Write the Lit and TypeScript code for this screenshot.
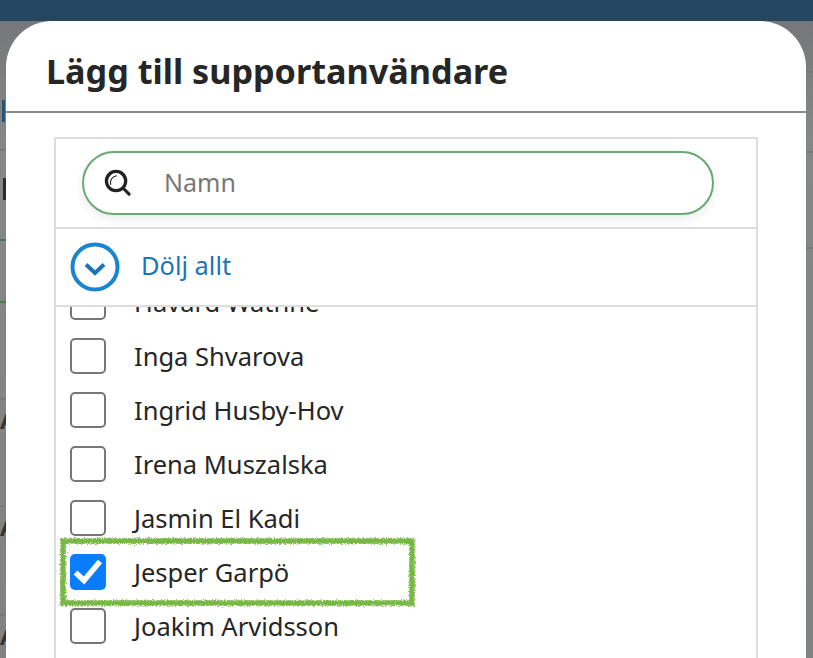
import { LitElement, html, css, svg } from "lit";
import { customElement } from "lit/decorators.js";

const names: [string, boolean][] = [
  ["Håvard Wathne", false],
  ["Inga Shvarova", false],
  ["Ingrid Husby-Hov", false],
  ["Irena Muszalska", false],
  ["Jasmin El Kadi", false],
  ["Jesper Garpö", true],
  ["Joakim Arvidsson", false],
];

@customElement("app-root")
export class AppRoot extends LitElement {
  static styles = css`
    :host {
      display: block;
      position: relative;
      width: 813px;
      height: 658px;
      overflow: hidden;
      font-family: "Noto Sans", sans-serif;
      background: #848686;
      color: #262626;
    }
    .topbar { height: 21px; background: #234663; }
    .backdrop { display: flex; justify-content: space-between; height: 637px; background: linear-gradient(#757778, #868888 18%, #808282); }
    .col { width: 400px; display: flex; flex-direction: column; }
    .b { flex: none; border-bottom: 2px solid #787a7a; box-sizing: border-box; display: flex; align-items: flex-start; overflow: hidden; }
    .h52 { height: 52px; }
    .h78 { height: 78px; }
    .h80 { height: 80px; }
    .h90 { height: 90px; }
    .h96 { height: 96px; }
    .h62 { height: 62px; }
    .h97 { height: 97px; }
    .h107 { height: 107px; }
    .h109 { height: 109px; }
    .green { border-color: #4d7557; }
    .mark-blue { width: 3px; height: 22px; background: #23557f; margin: 27px 0 0 2px; }
    .mark-dark { width: 3px; height: 22px; background: #2a2b2c; margin: 27px 0 0 3px; }
    .a { font-weight: 700; font-size: 22px; line-height: 1; color: #333; margin-top: 9px; }
    .modal {
      position: absolute;
      left: 6px;
      top: 21px;
      width: 800px;
      height: 700px;
      background: #fff;
      border-radius: 46px 46px 0 0;
    }
    .head {
      box-sizing: border-box;
      border-bottom: 2px solid #8a8a8a;
      height: 92px;
      padding: 26px 0 0 40px;
    }
    h1 {
      margin: 0;
      font-size: 34.2px;
      line-height: 48px;
      font-weight: 700;
      color: #262626;
      white-space: nowrap;
    }
    .panel {
      margin: 24px 0 0 48px;
      width: 704px;
      box-sizing: border-box;
      border: 2px solid #dddddd;
      border-bottom: 0;
      height: 600px;
    }
    .search-wrap { height: 90px; box-sizing: border-box; border-bottom: 2px solid #dddddd; padding: 12px 0 0 26px; }
    .search {
      width: 632px;
      height: 64px;
      box-sizing: border-box;
      border: 2px solid #69a972;
      border-radius: 32px;
      box-shadow: 0 4px 10px rgba(0, 0, 0, 0.08);
      display: flex;
      align-items: center;
      padding-left: 20px;
      gap: 33px;
      background: #fff;
    }
    .search svg { width: 27px; height: 27px; flex: none; margin-bottom: 2px; }
    .search span { font-size: 25px; color: #777; line-height: 1; padding-bottom: 2px; }
    .toggle {
      height: 78px;
      box-sizing: border-box;
      border-bottom: 2px solid #dddddd;
      display: flex;
      align-items: center;
      padding-left: 14px;
      gap: 21px;
      color: #1b75b9;
      font-size: 25.4px;
    }
    .toggle svg { width: 50px; height: 50px; flex: none; }
    .toggle span { padding-bottom: 4px; }
    .list { height: 500px; overflow: hidden; }
    .list-inner { margin-top: -32px; }
    .row { height: 54px; display: flex; align-items: center; padding-left: 14px; gap: 28px; font-size: 25.5px; white-space: nowrap; }
    .box {
      width: 36px;
      height: 36px;
      box-sizing: border-box;
      border: 2px solid #777;
      border-radius: 5px;
      flex: none;
      background: #fff;
    }
    .box.on {
      border: 0;
      background: #0a7cff;
      display: flex;
      align-items: center;
      justify-content: center;
    }
    .box.on svg { width: 30px; height: 30px; }
    .mark {
      position: absolute;
      left: 0;
      top: 0;
      width: 813px;
      height: 658px;
      pointer-events: none;
    }
  `;

  render() {
    return html`
      <div class="topbar"></div>
      <div class="backdrop">
        <div class="col">
          <div class="b h52"></div>
          <div class="b h78"><div class="mark-blue"></div></div>
          <div class="b h90 green"><div class="mark-dark"></div></div>
          <div class="b h62 green"></div>
          <div class="b h97"></div>
          <div class="b h107"><span class="a">A</span></div>
          <div class="b h109"><span class="a">A</span></div>
          <div class="b h52"><span class="a">A</span></div>
        </div>
        <div class="col">
          <div class="b h52"></div>
          <div class="b h80"></div>
          <div class="b h96"></div>
        </div>
      </div>
      <div class="modal">
        <div class="head"><h1>Lägg till supportanvändare</h1></div>
        <div class="panel">
          <div class="search-wrap">
            <div class="search">
              <svg viewBox="0 0 28 28" fill="none" stroke="#222" stroke-linecap="round">
                <circle cx="12.5" cy="12.5" r="10" stroke-width="3.4"></circle>
                <path d="M20.5 20.5L26 26" stroke-width="3.2"></path>
                <path d="M7 16c-1-4 1-8 6-9" stroke-width="1.2"></path>
              </svg>
              <span>Namn</span>
            </div>
          </div>
          <div class="toggle">
            <svg viewBox="0 0 50 50" fill="none" stroke="#1a85cf">
              <circle cx="25" cy="25" r="22.5" stroke-width="4"></circle>
              <path d="M16 22.5l9 8.5 9-8.5" stroke-width="4" stroke="#1b75b9"></path>
            </svg>
            <span>Dölj allt</span>
          </div>
          <div class="list">
            <div class="list-inner">
              ${names.map(
                ([n, on]) => html`
                  <div class="row">
                    <div class="box ${on ? "on" : ""}">
                      ${on
                        ? html`<svg viewBox="0 0 30 30" fill="none" stroke="#fff" stroke-width="5.5">
                            <path d="M2.5 15.5l8.5 8L27 4.5"></path>
                          </svg>`
                        : ""}
                    </div>
                    <span>${n}</span>
                  </div>
                `
              )}
            </div>
          </div>
        </div>
      </div>
      <svg class="mark" viewBox="0 0 813 658" fill="none">
        <defs>
          <filter id="rough" x="-5%" y="-20%" width="110%" height="140%">
            <feTurbulence type="fractalNoise" baseFrequency="0.9" numOctaves="2" seed="4"></feTurbulence>
            <feDisplacementMap in="SourceGraphic" scale="5"></feDisplacementMap>
          </filter>
        </defs>
        ${svg`<rect x="63" y="541" width="349" height="62" stroke="#76b843" stroke-width="5.5" filter="url(#rough)"></rect>`}
      </svg>
    `;
  }
}
